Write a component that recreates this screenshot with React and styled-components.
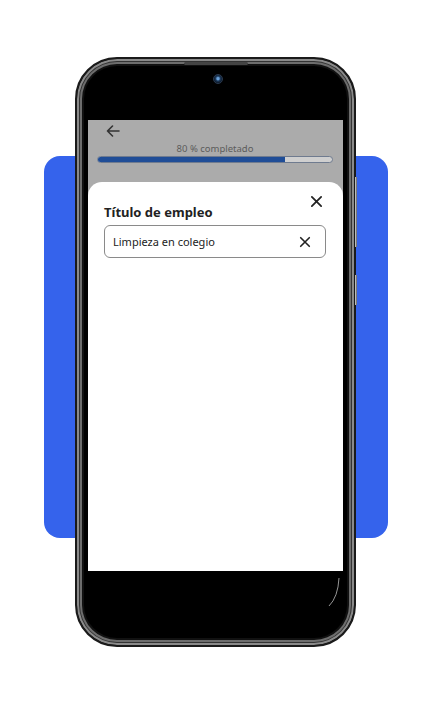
import React from 'react';
import styled, { createGlobalStyle } from 'styled-components'

const Global = createGlobalStyle`
  html, body {
    margin: 0;
    padding: 0;
    background: #fff;
  }
  body {
    font-family: "Noto Sans", "Open Sans", sans-serif;
  }
`

const Stage = styled.div`
  display: grid;
  width: 434px;
  height: 704px;
  overflow: hidden;
  background: #fff;
`
const Backdrop = styled.div`
  grid-area: 1 / 1;
  margin: 156px 0 0 44px;
  width: 344px;
  height: 382px;
  border-radius: 16px;
  background: #3563ec;
`
const Phone = styled.div`
  grid-area: 1 / 1;
  position: relative;
  box-sizing: border-box;
  margin: 57px 0 0 75px;
  width: 281px;
  height: 590px;
  border-radius: 42px;
  background: #000;
  border: 2px solid #1a1a1a;
  box-shadow: inset 0 0 0 2px #8a8a8a, inset 0 0 0 3px #333, inset 0 0 0 5px #6d6d6d, inset 0 0 0 7px #111;
  padding: 61px 11px 74px 11px;
  display: flex;
`
const Speaker = styled.div`
  position: absolute;
  top: 3px;
  left: 107px;
  width: 64px;
  height: 3px;
  border-radius: 2px;
  background: #444;
`
const Camera = styled.div`
  position: absolute;
  top: 15px;
  left: 136px;
  width: 8px;
  height: 8px;
  border-radius: 50%;
  background: radial-gradient(circle at 50% 45%, #6aa0d8 0 18%, #1d3b5e 40%, #0b1420 75%);
  border: 1px solid #2a3a50;
`
const SideButton = styled.div`
  position: absolute;
  right: -3px;
  top: ${p => p.$top}px;
  width: 1px;
  height: ${p => p.$h}px;
  background: #777;
  border-left: 1px solid #bbb;
`
const Glare = styled.svg`
  position: absolute;
  right: 14px;
  bottom: 38px;
`
const Screen = styled.div`
  flex: 1;
  display: flex;
  flex-direction: column;
  background: #ababab;
  overflow: hidden;
`
const TopBar = styled.div`
  height: 62px;
  box-sizing: border-box;
  padding: 2px 10px 0 9px;
  display: flex;
  flex-direction: column;
`
const BackBtn = styled.div`
  height: 18px;
  padding-left: 9px;
  display: flex;
  align-items: center;
  color: #333;
`
const Progress = styled.div`
  margin-top: 3px;
  text-align: center;
  font-size: 9.5px;
  color: #5c5c5c;
  line-height: 12px;
`
const Track = styled.div`
  margin-top: 1px;
  height: 5px;
  border-radius: 4px;
  border: 1px solid #6f7b8f;
  background: #cfcfcf;
  overflow: hidden;
`
const Fill = styled.div`
  height: 100%;
  background: #1f4d97;
`
const Sheet = styled.div`
  flex: 1;
  background: #fff;
  border-radius: 14px 14px 0 0;
  padding: 13px 17px 0 16px;
  display: flex;
  flex-direction: column;
`
const HeadRow = styled.div`
  display: flex;
  justify-content: space-between;
  align-items: flex-start;
`
const Title = styled.h2`
  margin: 9px 0 0 0;
  font-size: 13px;
  font-weight: 700;
  color: #222;
  line-height: 16px;
`
const IconBtn = styled.div`
  display: flex;
  color: #222;
  margin-right: ${p => p.$mr || 0}px;
`
const Field = styled.div`
  margin-top: 5px;
  height: 33px;
  box-sizing: border-box;
  border: 1px solid #8a8a8a;
  border-radius: 6px;
  display: flex;
  align-items: center;
  justify-content: space-between;
  padding: 0 14px 0 8px;
  font-size: 11px;
  color: #222;
`

const Cross = ({ size }) => (
  <svg width={size} height={size} viewBox="0 0 14 14" fill="none" stroke="currentColor" strokeWidth="1.9" strokeLinecap="round">
    <path d="M2 2 L12 12 M12 2 L2 12" />
  </svg>
)

const App = () => {
  const done = 80
  return (
    <>
      <Global />
      <Stage>
        <Backdrop />
        <Phone>
          <Speaker />
          <Camera />
          <SideButton $top={118} $h={70} />
          <SideButton $top={216} $h={30} />
          <Glare width="12" height="30" viewBox="0 0 12 30">
            <path d="M11 1 Q10 20 1 29" stroke="#bbb" strokeWidth="0.8" fill="none" />
          </Glare>
          <Screen>
            <TopBar>
              <BackBtn>
                <svg width="14" height="12" viewBox="0 0 14 12" fill="none" stroke="currentColor" strokeWidth="1.6" strokeLinecap="round" strokeLinejoin="round">
                  <path d="M13 6 H1.5 M6.5 1 L1.5 6 L6.5 11" />
                </svg>
              </BackBtn>
              <Progress>{done} % completado</Progress>
              <Track>
                <Fill style={{ width: `${done}%` }} />
              </Track>
            </TopBar>
            <Sheet>
              <HeadRow>
                <Title>Título de empleo</Title>
                <IconBtn $mr={3}><Cross size={13} /></IconBtn>
              </HeadRow>
              <Field>
                <span>Limpieza en colegio</span>
                <IconBtn><Cross size={12} /></IconBtn>
              </Field>
            </Sheet>
          </Screen>
        </Phone>
      </Stage>
    </>
  )
}

export default App
